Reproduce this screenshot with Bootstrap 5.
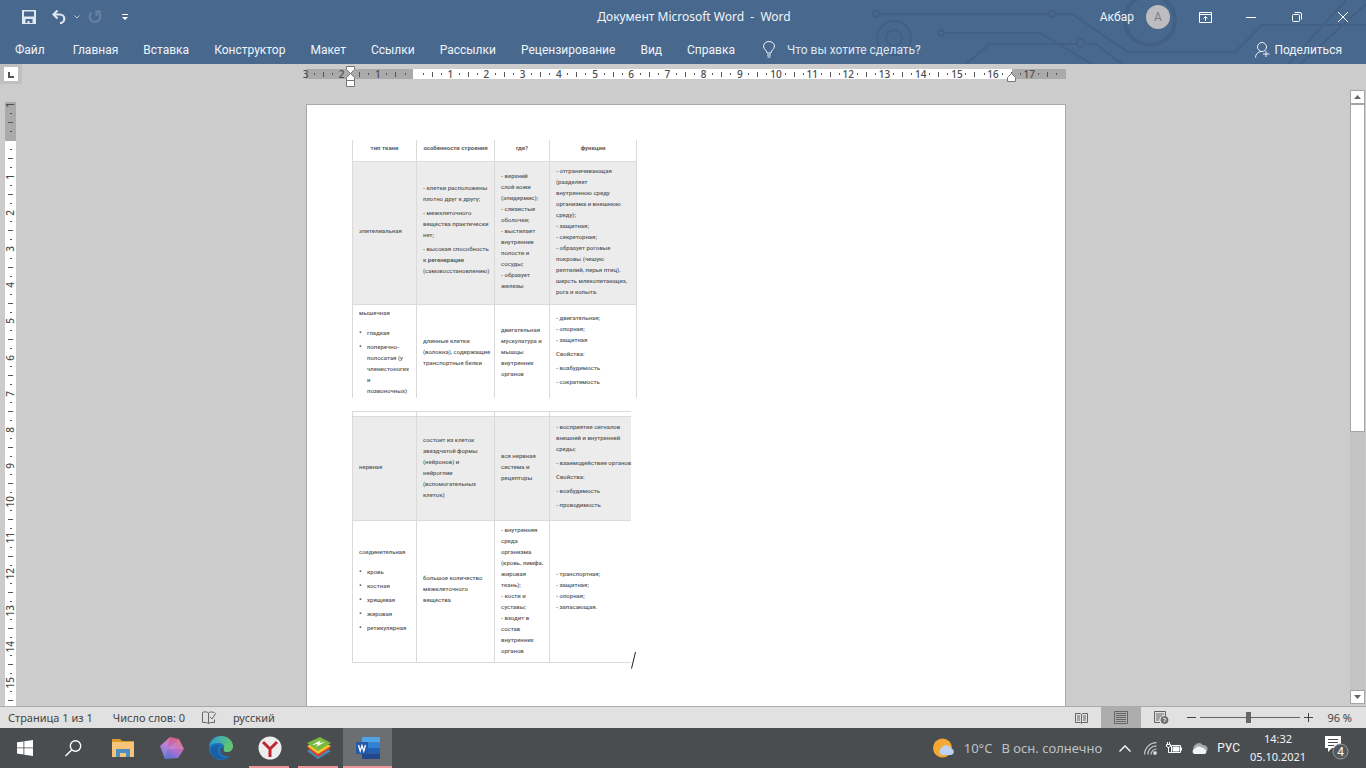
<!DOCTYPE html>
<html lang="ru">
<head>
<meta charset="utf-8">
<meta name="viewport" content="width=device-width, initial-scale=1">
<title>Документ Microsoft Word - Word</title>
<link href="https://cdn.jsdelivr.net/npm/bootstrap@5.3.0/dist/css/bootstrap.min.css" rel="stylesheet">
<style>
:root{--word:#48688e;--desk:#cccccc;--ruler-dark:#aaaaaa}
body{font-family:Roboto,"Noto Sans",sans-serif;font-size:12px;line-height:16px;background:var(--desk);color:#444}
button{background:none;border:0;padding:0;color:inherit;font:inherit}
svg{display:block;flex:none}
a{color:inherit;text-decoration:none}
.word-head{background:var(--word);color:#f1f5f9;height:64px}
.circuit{right:0;top:0}
.title-row{height:34px}
.side{flex:1 1 0}
.doc-title{white-space:pre;font-family:"Noto Sans",sans-serif}
.win-btn{width:46px;height:30px}
.avatar{width:24px;height:24px;background:#bdbcbe;color:#7d7f86}
.quick{padding-left:22px}
.tab-row{height:31px;padding-left:15px}
.tabs{gap:25px}
.file-tab{padding-right:3px}
.tell{background:none;border:0;padding:0;color:#dfe8f2;width:150px;outline:0}
.tell::placeholder{color:#dfe8f2;opacity:1}
.ruler-row{height:24px}
.ruler-end{width:16px}
.corner{width:22px;height:20px;background:#bfbfbf;padding:3px 4px}
.corner span{width:14px;height:14px;background:#fff}
.sheet-width{width:760px;max-width:100%}
.h-ruler{height:10px;margin-top:5px;background:linear-gradient(90deg,var(--ruler-dark) 107px,#fff 107px,#fff calc(100% - 54px),var(--ruler-dark) calc(100% - 54px))}
.ticks{font-family:"Noto Sans",sans-serif;font-size:10px;line-height:11px;color:#4c4c4c}
.ticks span{flex:1 1 0;min-width:0;min-height:0;display:flex;align-items:center;justify-content:center}
.ticks b{font-weight:500}
.h-ruler .ticks{margin:0 5px 0 -5px}
.ticks i{background:#555}
.h-ruler .dot{width:1px;height:2px}
.h-ruler .bar{width:1px;height:5px}
.mark-left{left:40px;top:-4px}
.mark-right{right:50px;top:4px}
.v-gutter{width:22px;padding:14px 6px 0 5px}
.v-ruler{height:100%;display:flow-root;background:linear-gradient(180deg,var(--ruler-dark) 39px,#fff 39px)}
.v-ruler .ticks{height:614px;margin-top:-2px}
.v-ruler b{writing-mode:vertical-rl;transform:rotate(180deg)}
.v-ruler .dot{width:2px;height:1px}
.v-ruler .bar{width:5px;height:1px}
.sheet{background:#fff;border:1px solid #a8a8a8;border-bottom:0;margin-top:16px;padding:35px 0 0 45px}
.bio{font-size:6px;line-height:11px;font-weight:500;color:#5c5c5c;border-collapse:collapse;table-layout:fixed;white-space:nowrap}
.bio td,.bio th{border:1px solid #dadada;padding:0 0 4px 6px;vertical-align:middle}
.bio th{padding:0 0 5px;text-align:center;font-weight:700;border-top:0}
.bio p{margin:0 0 3px}
.bio ul{margin:9px 0 0;padding:0 0 0 8px;list-style:none}
.bio li{margin-bottom:3px;position:relative}
.bio li:last-child{margin:0}
.bio li::before{content:"•";position:absolute;left:-8px;font-size:8px}
.bio b{font-weight:700}
.bio .shade td{background:#ececec}
.upper{width:285px;margin-bottom:13px}
.upper tr:last-child td{border-bottom:0;padding-bottom:0}
.lower{width:279px}
.lower tr>:last-child{border-right:0}
.lower .r-thin td{padding:0}
.c1{width:64px}.c2{width:78px}.c3{width:55px}
.r-head{height:21px}.r-epi{height:143px}.r-mus{height:94px}.r-thin{height:5px;line-height:0}.r-ner{height:104px}.r-con{height:142px}
.scroller{width:16px;padding:2px 1px 2px 0}
.sc-btn{height:14px;background:#fff;border:1px solid #a5a5a5}
.sc-track{background:#c4c4c4}
.sc-thumb{height:56%;background:#fff;border:1px solid #a5a5a5}
.status{height:22px;background:#e1e1e1;border-top:1px solid #ababab;font-family:"Noto Sans",sans-serif;font-size:11px}
.view-btn{width:40px;height:21px}
.view-on{background:#adadad}
.minus{margin-left:6px}
.pct{margin:0 14px}
.zoomer{appearance:none;width:100px;height:12px;background:linear-gradient(#666,#666) center/100% 1px no-repeat;margin:0}
.zoomer::-webkit-slider-thumb{appearance:none;width:5px;height:11px;background:#666}
.taskbar{height:40px;background:#494d50;color:#f2f2f2}
.app{width:49px;height:40px}
.run::after{content:"";position:absolute;left:4px;right:5px;bottom:0;height:2px;background:#f0949b}
.current{background:#6c6f72}
.current::after{left:0;right:0}
.weather{font-family:"Noto Sans",sans-serif;font-size:13px;color:#bfc1c2;gap:9px}
.clock{font-family:"Noto Sans",sans-serif;font-size:11px;line-height:18px;width:58px}
.tray{gap:9px}
.badge-num{font-size:12px}
</style>
</head>
<body class="vh-100 d-flex flex-column overflow-hidden">
<header class="word-head position-relative flex-shrink-0">
  <svg class="circuit position-absolute" width="500" height="64" viewBox="866 0 500 64" fill="none" stroke="#426084" stroke-width="2" aria-hidden="true">
    <circle cx="876" cy="14" r="3"/><path d="M880 14H1050M1055 14H1072L1128 52H1235L1262 25H1366M945 33H1040L1092 64M966 64L990 44H1077M1086 44H1096L1122 64M1288 64L1346 0M1300 64L1366 4"/>
    <circle cx="894" cy="38" r="17"/><circle cx="894" cy="38" r="8"/><circle cx="1052" cy="14" r="3"/><circle cx="941" cy="33" r="3"/><circle cx="1081" cy="43" r="4"/><circle cx="1150" cy="20" r="25" stroke-width="4"/>
  </svg>
  <div class="title-row d-flex align-items-center position-relative">
    <div class="quick side d-flex align-items-center">
      <button aria-label="Сохранить"><svg width="14" height="14" viewBox="0 0 14 14"><path d="M0 0h14v14H0zM2 1.500v5h10v-5zM3.500 9v4h2v-2h2v2h3V9z" fill="#dfe7f0" fill-rule="evenodd"/></svg></button>
      <button aria-label="Отменить" class="ms-3"><svg width="14" height="14" viewBox="0 0 14 14" fill="none" stroke="#dfe7f0" stroke-width="2.200"><path d="M5.500 .5L1.500 4.500 5.500 8.500M1.500 4.500H8a4.300 4.300 0 0 1 0 8.600"/></svg></button>
      <button aria-label="Список отмены" class="ms-2"><svg width="6" height="4" viewBox="0 0 6 4" fill="none" stroke="#b9c9da"><path d="M.5.5L3 3 5.500.5"/></svg></button>
      <button aria-label="Повторить" class="ms-2"><svg width="14" height="14" viewBox="0 0 14 14" fill="none" stroke="#6882a3" stroke-width="2"><path d="M3.500 2.500a5.400 5.400 0 1 0 7 0M8.500 6V1.500H13"/></svg></button>
      <button aria-label="Настройка панели" class="ms-3 ps-1"><svg width="6" height="7" viewBox="0 0 6 7" fill="#fff"><path d="M0 0h6v1H0zM0 3h6L3 6z"/></svg></button>
    </div>
    <div class="doc-title">Документ Microsoft Word  -  Word</div>
    <div class="side d-flex align-items-center justify-content-end h-100">
      <span class="me-2 pe-1">Акбар</span>
      <span class="avatar rounded-circle d-flex align-items-center justify-content-center me-2">A</span>
      <div class="d-flex">
      <button class="win-btn d-flex align-items-center justify-content-center ms-1" aria-label="Параметры ленты"><svg width="13" height="11" viewBox="0 0 13 11" fill="none" stroke="#fff"><path d="M.5.5h12v10H.5zM.5 2.500h12M6.500 9V4.500M4.500 6.500l2-2 2 2"/></svg></button>
      <button class="win-btn d-flex align-items-center justify-content-center" aria-label="Свернуть"><svg width="10" height="1"><path d="M0 0h10v1H0z" fill="#fff"/></svg></button>
      <button class="win-btn d-flex align-items-center justify-content-center" aria-label="Восстановить"><svg width="10" height="10" viewBox="0 0 10 10" fill="none" stroke="#fff"><rect x=".5" y="2.500" width="7" height="7" rx="1"/><path d="M2.500.5H8a1.500 1.500 0 0 1 1.500 1.500v5.500"/></svg></button>
      <button class="win-btn d-flex align-items-center justify-content-center" aria-label="Закрыть"><svg width="10" height="10" viewBox="0 0 10 10" stroke="#fff"><path d="M0 0l10 10M10 0L0 10"/></svg></button>
      </div>
    </div>
  </div>
  <nav class="tab-row d-flex align-items-center position-relative">
    <div class="tabs d-flex">
      <a class="file-tab" href="#">Файл</a><a href="#">Главная</a><a href="#">Вставка</a><a href="#">Конструктор</a><a href="#">Макет</a><a href="#">Ссылки</a><a href="#">Рассылки</a><a href="#">Рецензирование</a><a href="#">Вид</a><a href="#">Справка</a>
    </div>
    <label class="d-flex align-items-center ms-4">
      <svg class="me-2 ms-1" width="12" height="17" viewBox="0 0 12 17" fill="none" stroke="#eef3f8"><path d="M4 12c0-3-3.500-3.500-3.500-7A5.300 5 0 0 1 6 .5 5.300 5 0 0 1 11.500 5c0 3.500-3.500 4-3.500 7zM4 14h4M4.500 16h3"/></svg>
      <input class="tell ms-1" type="text" placeholder="Что вы хотите сделать?" aria-label="Что вы хотите сделать?">
    </label>
    <button class="ms-auto me-4 d-flex align-items-center"><svg class="me-1" width="15" height="16" viewBox="0 0 15 16" fill="none" stroke="#eef3f8"><circle cx="7" cy="5" r="4.500"/><path d="M.5 15.500C.5 12 3 10 6 9.500M11 9v6M8 12h6.500"/></svg>Поделиться</button>
  </nav>
</header>

<div class="ruler-row d-flex flex-shrink-0">
  <button class="corner flex-shrink-0" aria-label="Табуляция"><span class="d-block"><svg width="14" height="14"><path d="M5 5v5h5" fill="none" stroke="#555" stroke-width="2"/></svg></span></button>
  <div class="flex-grow-1 d-flex justify-content-center">
    <div class="h-ruler sheet-width position-relative">
      <div class="ticks d-flex h-100" id="across"></div>
      <svg class="mark-left position-absolute" width="9" height="23" viewBox="0 0 9 23" fill="#fff" stroke="#777"><path d="M.5 1.500h8v3l-4 4-4-4zM.5 15.500v-3l4-4 4 4v3zM.5 15.500h8v6h-8z"/></svg>
      <svg class="mark-right position-absolute" width="9" height="9" viewBox="0 0 9 9" fill="#fff" stroke="#777"><path d="M.5 8.500v-4l4-4 4 4v4z"/></svg>
    </div>
  </div>
  <div class="ruler-end"></div>
</div>

<main class="d-flex flex-grow-1 overflow-hidden">
  <div class="v-gutter flex-shrink-0"><div class="v-ruler"><div class="ticks d-flex flex-column" id="down"></div></div></div>
  <div class="flex-grow-1 d-flex justify-content-center">
    <article class="sheet sheet-width">
      <table class="bio upper">
        <colgroup><col class="c1"><col class="c2"><col class="c3"><col></colgroup>
        <thead><tr class="r-head"><th>тип ткани</th><th>особенности строения</th><th>где?</th><th>функции</th></tr></thead>
        <tbody>
        <tr class="shade r-epi">
          <td>эпителиальная</td>
          <td><p>- клетки расположены<br>плотно друг к другу;</p><p>- межклеточного<br>вещества практически<br>нет;</p><p>- высокая способность<br>к <b>регенерации</b><br>(самовосстановлению)</p></td>
          <td>- верхний<br>слой кожи<br>(эпидермис);<br>- слизистые<br>оболочки;<br>- выстилает<br>внутренние<br>полости и<br>сосуды;<br>- образует<br>железы</td>
          <td>- отграничивающая<br>(разделяет<br>внутреннюю среду<br>организма и внешнюю<br>среду);<br>- защитная;<br>- секреторная;<br>- образует роговые<br>покровы (чешую<br>рептилий, перья птиц),<br>шерсть млекопитающих,<br>рога и копыта.</td>
        </tr>
        <tr class="r-mus">
          <td>мышечная<ul><li>гладкая</li><li>поперечно-<br>полосатая (у<br>членистоногих<br>и<br>позвоночных)</li></ul></td>
          <td>длинные клетки<br>(волокна), содержащие<br>транспортные белки</td>
          <td>двигательная<br>мускулатура и<br>мышцы<br>внутренних<br>органов</td>
          <td><p>- двигательная;<br>- опорная;<br>- защитная</p><p>Свойства:</p><p>- возбудимость</p><p>- сократимость</p></td>
        </tr>
        </tbody>
      </table>
      <div class="d-flex align-items-end">
      <table class="bio lower">
        <colgroup><col class="c1"><col class="c2"><col class="c3"><col></colgroup>
        <tbody>
        <tr class="r-thin"><td></td><td></td><td></td><td></td></tr>
        <tr class="shade r-ner">
          <td>нервная</td>
          <td>состоит из клеток<br>звездчатой формы<br>(нейронов) и<br>нейроглии<br>(вспомогательных<br>клеток)</td>
          <td>вся нервная<br>система и<br>рецепторы</td>
          <td><p>- восприятие сигналов<br>внешней и внутренней<br>среды;</p><p>- взаимодействие органов</p><p>Свойства:</p><p>- возбудимость</p><p>- проводимость</p></td>
        </tr>
        <tr class="r-con">
          <td>соединительная<ul><li>кровь</li><li>костная</li><li>хрящевая</li><li>жировая</li><li>ретикулярная</li></ul></td>
          <td><p>большое количество<br>межклеточного<br>вещества</p></td>
          <td>- внутренняя<br>среда<br>организма<br>(кровь, лимфа,<br>жировая<br>ткань);<br>- кости и<br>суставы;<br>- входит в<br>состав<br>внутренних<br>органов</td>
          <td>- транспортная;<br>- защитная;<br>- опорная;<br>- запасающая.</td>
        </tr>
        </tbody>
      </table>
      <svg width="6" height="12" viewBox="0 0 6 12" overflow="visible" stroke="#222"><path d="M.5 17.500L4.500 1"/></svg>
      </div>
    </article>
  </div>
  <div class="scroller flex-shrink-0 d-flex flex-column">
    <button class="sc-btn d-flex align-items-center justify-content-center" aria-label="Вверх"><svg width="7" height="4"><path d="M0 4h7L3.500 0z" fill="#666"/></svg></button>
    <div class="sc-track flex-grow-1"><div class="sc-thumb"></div></div>
    <button class="sc-btn d-flex align-items-center justify-content-center" aria-label="Вниз"><svg width="7" height="4"><path d="M0 0h7L3.500 4z" fill="#666"/></svg></button>
  </div>
</main>

<footer class="status d-flex align-items-center flex-shrink-0 ps-2">
  <span>Страница 1 из 1</span><span class="ms-3 ps-1">Число слов: 0</span>
  <button class="ms-3" aria-label="Правописание"><svg width="16" height="13" viewBox="0 0 16 13" fill="none" stroke="#666"><path d="M7.500 12.500V2C6 .5 3 .5 1.500 1.500v10h4l2 1 2-1h4v-3M7.500 2C8.500 1 10 .5 13.500 1.500M9 6l2 2 4-6"/></svg></button>
  <span class="ms-3">русский</span>
  <div class="d-flex align-items-center ms-auto">
    <button class="view-btn d-flex align-items-center justify-content-center" aria-label="Режим чтения"><svg width="13" height="12" viewBox="0 0 13 12" fill="none" stroke="#666"><path d="M.5 1.500h5l1 1 1-1h5v9h-5l-1 1-1-1h-5zM6.500 2v9M2 4h3M2 6h3M2 8h3M8 4h3M8 6h3M8 8h3"/></svg></button>
    <button class="view-btn view-on d-flex align-items-center justify-content-center" aria-label="Разметка страницы"><svg width="14" height="13" viewBox="0 0 14 13" fill="none" stroke="#666"><path d="M.5.5h13v12H.5zM2 2.500h10M2 4.500h10M2 6.500h10M2 8.500h10M2 10.500h10"/></svg></button>
    <button class="view-btn d-flex align-items-center justify-content-center" aria-label="Веб-документ"><svg width="15" height="13" viewBox="0 0 15 13" fill="none" stroke="#666"><path d="M6 11.500H.5V.5h11V5M2 3h8M2 5h6M2 7h4M2 9h3"/><circle cx="10.500" cy="9" r="3.500" fill="#777"/><path d="M9 7l3 1-2 3" stroke="#ddd"/></svg></button>
    <button class="minus" aria-label="Уменьшить"><svg width="9" height="9"><path d="M0 4h9v1H0z" fill="#444"/></svg></button>
    <input class="zoomer mx-1" type="range" min="0" max="100" value="48" aria-label="Масштаб">
    <button aria-label="Увеличить"><svg width="9" height="9"><path d="M0 4h9v1H0zM4 0h1v9H4z" fill="#444"/></svg></button>
    <span class="pct">96 %</span>
  </div>
</footer>

<div class="taskbar d-flex align-items-center flex-shrink-0">
  <button class="app d-flex align-items-center justify-content-center" aria-label="Пуск"><svg width="16" height="16" viewBox="0 0 16 16" fill="#fff"><path d="M0 2.300L6.500 1.400v6.100H0zM7.300 1.300L16 0v7.500H7.300zM0 8.300h6.500v6.200L0 13.600zM7.300 8.300H16V16l-8.700-1.300z"/></svg></button>
  <button class="app d-flex align-items-center justify-content-center" aria-label="Поиск"><svg width="17" height="17" viewBox="0 0 17 17" fill="none" stroke="#fff" stroke-width="1.400"><circle cx="10.500" cy="6" r="5.200"/><path d="M6.800 9.800L.5 16"/></svg></button>
  <button class="app d-flex align-items-center justify-content-center" aria-label="Проводник"><svg width="22" height="20" viewBox="0 0 22 20"><path d="M0 1h8l2 2h12v4H0z" fill="#d99a2b"/><path d="M0 4h22v15H0z" fill="#f8c477"/><path d="M4 19v-8h14v8h-4v-4H8v4z" fill="#4d8fc4"/></svg></button>
  <button class="app d-flex align-items-center justify-content-center" aria-label="Алиса"><svg width="24" height="24" viewBox="0 0 24 24"><defs><linearGradient id="gem" x1=".8" y1="0" x2=".2" y2="1"><stop stop-color="#e75b72"/><stop offset=".5" stop-color="#b570cb"/><stop offset="1" stop-color="#4d74dc"/></linearGradient></defs><path d="M10 1l9 2 5 10-6 9-13 1L0 10z" fill="url(#gem)"/><path d="M10 1L5 23 0 10zM19 3L7 13l17 0z" fill="#fff" opacity=".13"/></svg></button>
  <button class="app d-flex align-items-center justify-content-center" aria-label="Edge"><svg width="24" height="24" viewBox="0 0 24 24"><defs><linearGradient id="sea"><stop stop-color="#279bd8"/><stop offset="1" stop-color="#66c66d"/></linearGradient></defs><circle cx="12" cy="12" r="12" fill="#1c72b8"/><path d="M0 11C1 4 6 0 12 0c7 0 12 5 12 10 0 4-3 6-6 6s-4-1-3-3c1-3-1-6-5-6-5 0-9 2-10 4z" fill="url(#sea)"/><path d="M24 10c0 4-3 6-6 6s-4-1-3-3l-3-1c-2 5 2 9 9 8l1 3h3z" fill="#494d50"/><path d="M24 10c0 4-3 6-6 6s-4-1-3-3l1-6z" fill="#62c27a"/><path d="M10 9c-4 5-1 13 8 13-8 4-16-1-16-7 0-4 5-7 8-6z" fill="#1b5ea3"/></svg></button>
  <button class="app run position-relative d-flex align-items-center justify-content-center" aria-label="Яндекс Браузер"><svg width="24" height="24" viewBox="0 0 24 24"><circle cx="12" cy="12" r="11.500" fill="#ececec"/><path d="M5 6l7 7 7-7M12 12v9" fill="none" stroke="#c02632" stroke-width="3"/></svg></button>
  <button class="app run position-relative d-flex align-items-center justify-content-center" aria-label="BlueStacks"><svg width="26" height="24" viewBox="0 0 26 24"><path d="M1 15l13-5 11 5-13 8z" fill="#3a8fc0"/><path d="M1 12l13-5 11 5-13 9z" fill="#d7412e"/><path d="M1 10l13-5 11 5-13 8z" fill="#f2c531"/><path d="M1 7l13-6 11 6-13 8z" fill="#78b93e"/><path d="M6 9l9-5-2 3 6-1-9 5 2-3z" fill="#fff"/></svg></button>
  <button class="app run current position-relative d-flex align-items-center justify-content-center" aria-label="Word"><svg width="24" height="22" viewBox="0 0 24 22"><path d="M6 0h18v5.500H6z" fill="#4fa3e8"/><path d="M6 5.500h18V11H6z" fill="#3181d4"/><path d="M6 11h18v5.500H6z" fill="#2460b4"/><path d="M6 16.500h18V22H6z" fill="#204a8c"/><path d="M0 5h12v12H0z" fill="#2458a8"/><path d="M2.500 8l1.700 6L6 8.500 7.800 14l1.700-6" fill="none" stroke="#fff" stroke-width="1.300"/></svg></button>
  <div class="d-flex align-items-center ms-auto tray">
    <div class="weather d-flex align-items-center"><svg width="22" height="20" viewBox="0 0 22 20"><circle cx="9.500" cy="10" r="9.500" fill="#f5a834"/><path d="M9 17a4 4 0 0 1 0-7.500 5 5 0 0 1 9 1 3.300 3.300 0 0 1 0 6.500z" fill="#bcd3f2"/></svg><span>10°C</span><span>В осн. солнечно</span></div>
    <button class="ms-2" aria-label="Скрытые значки"><svg width="12" height="7" viewBox="0 0 12 7" fill="none" stroke="#fff" stroke-width="1.300"><path d="M.5 6.500L6 1l5.500 5.500"/></svg></button>
    <svg class="ms-1" width="13" height="13" viewBox="0 0 13 13" fill="none" stroke="#c8caca" stroke-width="1.200"><path d="M.6 12.500C.6 6 6 .7 12.500 .7M3.800 12.500c0-5 3.700-8.600 8.700-8.600M7 12.500C7 9.500 9.500 7 12.500 7"/><circle cx="11" cy="11" r="1.300" fill="#fff"/></svg>
    <svg width="16" height="12" viewBox="0 0 16 12" fill="none" stroke="#fff"><path d="M5.500 3.500h9v7h-9zM15.500 5.500v3M1.500 0v2M3.500 0v2M.5 2.500h4v2l-2 1-2-1zM2.500 5v5.500h3"/><path d="M7 5h6v4H7z" fill="#fff"/></svg>
    <svg width="17" height="11" viewBox="0 0 17 11"><path d="M4 8a3.500 3.500 0 0 1 0-6 5 5 0 0 1 8 0 4 4 0 0 1 4 6z" fill="#a5a7a8"/><path d="M3 11a3 3 0 0 1 1-5.500 5 5 0 0 1 7-1 4 4 0 0 1 3 2 2.500 2.500 0 0 1 0 4.500z" fill="#f2f2f2"/></svg>
    <span>РУС</span>
    <div class="clock text-center">14:32<br>05.10.2021</div>
    <button class="position-relative me-3 ms-2" aria-label="Уведомления"><svg width="26" height="26" viewBox="0 0 26 26"><path d="M1 1h16v12H8l-4 4v-4H1z" fill="#fff"/><path d="M4 4.500h10M4 7.500h10M4 10.500h6" stroke="#494d50"/><circle cx="16.500" cy="16.500" r="7.500" fill="#55585b" stroke="#999"/><text class="badge-num" x="16.500" y="21" text-anchor="middle" fill="#fff">4</text></svg></button>
  </div>
</div>
<script src="https://cdn.jsdelivr.net/npm/bootstrap@5.3.0/dist/js/bootstrap.bundle.min.js"></script>
<script>
// Each centimetre takes four slots: the number, a dot, a half mark, a dot.
function ticks(id, first, count) {
  let out = '';
  for (let i = 0; i < count; i++) {
    const n = Math.abs(first + i);
    out += '<span>' + (n ? '<b>' + n + '</b>' : '') + '</span><span><i class="dot"></i></span><span><i class="bar"></i></span><span><i class="dot"></i></span>';
  }
  document.getElementById(id).innerHTML = out;
}
ticks('across', -3, 21);
ticks('down', -1, 17);
</script>
</body>
</html>
